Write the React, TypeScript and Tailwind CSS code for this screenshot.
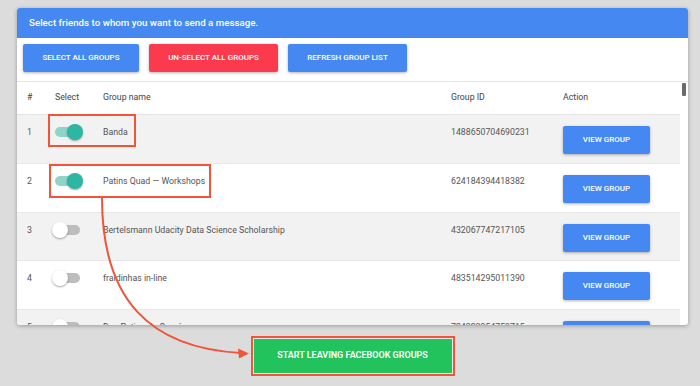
import React from 'react'

type Group = { n: number; name: string; id: string; on: boolean; shaded: boolean }

const groups: Group[] = [
  { n: 1, name: 'Banda', id: '1488650704690231', on: true, shaded: true },
  { n: 2, name: 'Patins Quad — Workshops', id: '624184394418382', on: true, shaded: false },
  { n: 3, name: 'Bertelsmann Udacity Data Science Scholarship', id: '432067747217105', on: false, shaded: true },
  { n: 4, name: 'fraldinhas in-line', id: '483514295011390', on: false, shaded: false },
  { n: 5, name: 'Dos Patins do Ceará', id: '724328354759715', on: false, shaded: true },
]

const Toggle = ({ on }: { on: boolean }) => (
  <div className="relative w-[31px] h-[16px] mt-[1px]">
    <div
      className={`absolute left-[3px] right-[3px] top-[3px] h-[10px] rounded-full ${
        on ? 'bg-[#8ed4c8]' : 'bg-[#bdbdbd]'
      }`}
    />
    <div
      className={`absolute top-0 w-[16px] h-[16px] rounded-full shadow-[0_1px_2px_rgba(0,0,0,0.35)] ${
        on ? 'right-0 bg-[#2db6a2]' : 'left-0 bg-white'
      }`}
    />
  </div>
)

const ActionButton = ({ label, color }: { label: string; color: string }) => (
  <button
    className={`h-[28px] rounded-[2px] text-white text-[8px] font-medium uppercase shadow-[0_1px_3px_rgba(0,0,0,0.3)] ${color}`}
  >
    {label}
  </button>
)

export default function App() {
  return (
    <div className="relative w-[700px] h-[386px] overflow-hidden bg-[#dcdcdc] pt-[8px] pl-[17px] font-['Roboto',sans-serif]">
      <div className="w-[671px] h-[317px] bg-white rounded-[3px] shadow-[0_1px_4px_rgba(0,0,0,0.3)] overflow-hidden flex flex-col">
        <div className="h-[30px] shrink-0 bg-[#4688f1] px-[12px] flex items-center text-white text-[9.75px] font-medium">
          Select friends to whom you want to send a message.
        </div>

        <div className="shrink-0 flex gap-[10px] px-[6px] pt-[6px] pb-[9px] border-b border-[#e6e6e6]">
          <div className="w-[116px] flex flex-col">
            <ActionButton label="Select all groups" color="bg-[#4688f1]" />
          </div>
          <div className="w-[129px] flex flex-col">
            <ActionButton label="Un-select all groups" color="bg-[#fc3a4e]" />
          </div>
          <div className="w-[119px] flex flex-col">
            <ActionButton label="Refresh group list" color="bg-[#4688f1]" />
          </div>
        </div>

        <div className="flex-1 flex min-h-0">
          <div className="flex-1 overflow-hidden text-[8.75px] text-[#555]">
            <div className="h-[33px] flex items-center pl-[10px] border-b border-[#e3e3e3] text-[#444]">
              <div className="w-[28px]">#</div>
              <div className="w-[48px]">Select</div>
              <div className="w-[348px]">Group name</div>
              <div className="w-[112px]">Group ID</div>
              <div>Action</div>
            </div>
            {groups.map((g) => (
              <div
                key={g.n}
                className={`h-[48.75px] flex items-start pl-[10px] border-b border-[#e8e8e8] ${
                  g.shaded ? 'bg-[#f2f2f2]' : 'bg-white'
                }`}
              >
                <div className="w-[25px] pt-[11px]">{g.n}</div>
                <div className="w-[51px] pt-[8px]">
                  <Toggle on={g.on} />
                </div>
                <div className="w-[348px] pt-[11px]">{g.name}</div>
                <div className="w-[112px] pt-[11px]">{g.id}</div>
                <div className="w-[87px] pt-[11px] flex flex-col">
                  <ActionButton label="View group" color="bg-[#4688f1]" />
                </div>
              </div>
            ))}
          </div>
          <div className="w-[8px] shrink-0 pt-[1px] flex justify-center">
            <div className="w-[4px] h-[13px] rounded-[1px] bg-[#6a6a6a]" />
          </div>
        </div>
      </div>

      <div className="w-[671px] flex justify-center mt-[11px]">
        <div className="border-2 border-[#f0553a] p-[1px] bg-[#eaeaea]">
          <button className="w-[198px] h-[34px] bg-[#22c35c] text-white text-[9px] font-semibold uppercase">
            Start leaving Facebook groups
          </button>
        </div>
      </div>

      <div className="absolute left-[48px] top-[114px] w-[88px] h-[33px] border-2 border-[#f0553a]" />
      <div className="absolute left-[49px] top-[164px] w-[162px] h-[34px] border-2 border-[#f0553a]" />

      <svg className="absolute left-0 top-0" width="700" height="386" viewBox="0 0 700 386">
        <path
          d="M102 198 C 102 300, 150 348, 241 353"
          fill="none"
          stroke="#f0553a"
          strokeWidth="2"
        />
        <polygon points="249,353.5 238,348.5 239,358.5" fill="#f0553a" />
      </svg>
    </div>
  )
}
